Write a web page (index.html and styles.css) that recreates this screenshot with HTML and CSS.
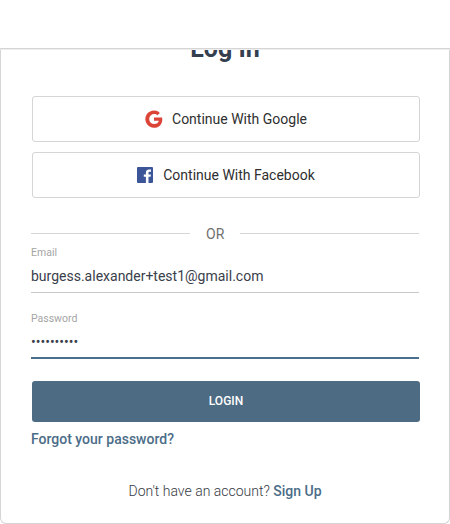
FILE: index.html
```html
<!DOCTYPE html>
<html lang="en">
<head>
<meta charset="utf-8">
<title>Log In</title>
<link rel="stylesheet" href="styles.css">
</head>
<body>
<header class="topbar"></header>
<main class="card">
  <h1 class="title">Log In</h1>
  <div class="providers">
    <button class="provider" type="button">
      <svg class="icon-google" width="18" height="18" viewBox="0 0 18 18"><path fill="#db4437" d="M9 7.500v3.300h4.900c-.5 2-2.200 3.300-4.700 3.300A5 5 0 0 1 9.200 4.100c1.300 0 2.400.5 3.200 1.200L14.900 2.900A8.600 8.600 0 1 0 9.100 17.700c4.900 0 8.200-3.400 8.200-8.300 0-.7-.1-1.300-.2-1.900z"/></svg>
      <span>Continue With Google</span>
    </button>
    <button class="provider" type="button">
      <svg class="icon-facebook" width="16" height="16" viewBox="0 0 16 16"><rect width="16" height="16" rx="1" fill="#3b5598"/><path fill="#fff" d="M8.900 16V9.800H6.800V7.400h2.100V5.600c0-2.100 1.300-3.200 3.200-3.200.9 0 1.700.1 1.900.1v2.200h-1.300c-1 0-1.200.5-1.200 1.200v1.500h2.400l-.3 2.400h-2.100V16z"/></svg>
      <span>Continue With Facebook</span>
    </button>
  </div>
  <div class="divider"><span>OR</span></div>
  <form class="form">
    <label class="field">
      <span class="label">Email</span>
      <input class="input" type="text" value="burgess.alexander+test1@gmail.com">
    </label>
    <label class="field field-active">
      <span class="label">Password</span>
      <input class="input" type="password" value="password12">
    </label>
    <button class="submit" type="button">LOGIN</button>
  </form>
  <a class="link forgot">Forgot your password?</a>
  <p class="signup">Don't have an account? <a class="link">Sign Up</a></p>
</main>
</body>
</html>
```

FILE: styles.css
```css
* { box-sizing: border-box; }

body {
  margin: 0;
  height: 524px;
  overflow: hidden;
  background: #fff;
  color: #353a43;
  font-family: Roboto, sans-serif;
  font-size: 14px;
}

.topbar {
  position: relative;
  z-index: 1;
  height: 48px;
  background: #fff;
  box-shadow: 0 1px 0 #d5d5d5, 0 2px 0 #eee;
}

.card {
  height: 491px;
  margin-top: -15px;
  padding: 0 30px;
  border: 1px solid #d5d5d5;
  border-top: 0;
  border-radius: 0 0 6px 6px;
}

.title {
  margin: 0;
  height: 32px;
  line-height: 32px;
  text-align: center;
  font-size: 25px;
  font-weight: 700;
  color: #343f50;
}

.providers {
  display: flex;
  flex-direction: column;
  gap: 10px;
  margin: 31px -1px 0 1px;
}

.provider {
  display: flex;
  align-items: center;
  justify-content: center;
  height: 46px;
  padding: 0;
  border: 1px solid #d5d5d5;
  border-radius: 3px;
  background: #fff;
  color: #2f2f2f;
  font: 400 14px Roboto, sans-serif;
}

.icon-google { margin-right: 9px; }
.icon-facebook { margin-right: 10px; }

.divider {
  display: flex;
  align-items: center;
  gap: 16px;
  height: 20px;
  margin-top: 26px;
  line-height: 20px;
  color: #717171;
}

.divider::before,
.divider::after {
  content: "";
  height: 1px;
  margin-bottom: 1px;
  background: #d5d5d5;
}

.divider::before { width: 159px; }
.divider::after { flex: 1; }

.form { display: flex; flex-direction: column; }

.field {
  display: flex;
  flex-direction: column;
  height: 49px;
  border-bottom: 1px solid #c9c9c9;
}

.label {
  height: 16px;
  padding-top: 1px;
  line-height: 16px;
  font-size: 10.5px;
  color: #a5a5a5;
}

.input {
  height: 32px;
  padding: 0;
  border: 0;
  outline: 0;
  background: transparent;
  color: #3a404b;
  font: 400 14px Roboto, sans-serif;
}

.field-active {
  height: 49px;
  margin-top: 17px;
  border-bottom: 2px solid #4a6e8c;
}

.submit {
  height: 41px;
  margin: 22px -1px 0 1px;
  padding: 0 0 2px;
  border: 0;
  border-radius: 3px;
  background: #4d6b82;
  color: #fff;
  font: 500 12px Roboto, sans-serif;
}

.link { color: #4b6c87; font-weight: 500; }

.forgot {
  display: block;
  margin-top: 7px;
  line-height: 20px;
}

.signup {
  margin: 32px 0 0;
  text-align: center;
  line-height: 20px;
  font-weight: 300;
}
```
